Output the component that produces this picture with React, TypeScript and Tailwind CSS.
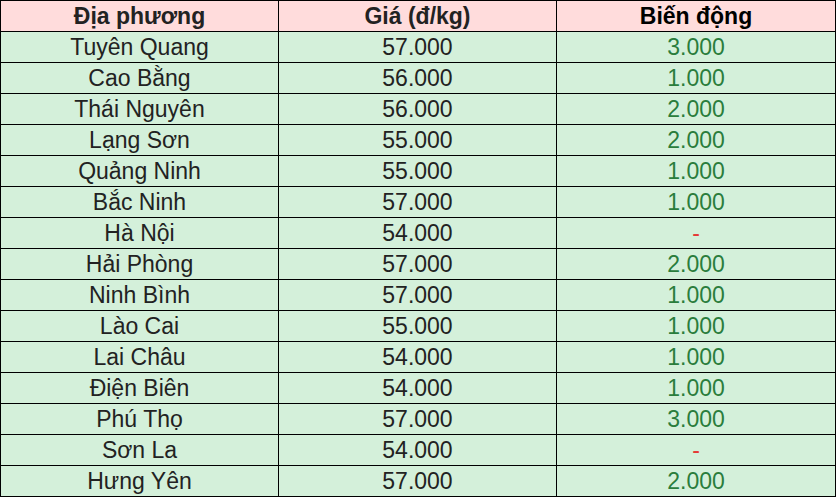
import React from "react";

const rows: [string, string, string][] = [
  ["Tuyên Quang", "57.000", "3.000"],
  ["Cao Bằng", "56.000", "1.000"],
  ["Thái Nguyên", "56.000", "2.000"],
  ["Lạng Sơn", "55.000", "2.000"],
  ["Quảng Ninh", "55.000", "1.000"],
  ["Bắc Ninh", "57.000", "1.000"],
  ["Hà Nội", "54.000", "-"],
  ["Hải Phòng", "57.000", "2.000"],
  ["Ninh Bình", "57.000", "1.000"],
  ["Lào Cai", "55.000", "1.000"],
  ["Lai Châu", "54.000", "1.000"],
  ["Điện Biên", "54.000", "1.000"],
  ["Phú Thọ", "57.000", "3.000"],
  ["Sơn La", "54.000", "-"],
  ["Hưng Yên", "57.000", "2.000"],
];

export default function App() {
  return (
    <div className="w-[837px] h-[498px] bg-white" style={{ fontFamily: '"Liberation Sans", Arial, sans-serif' }}>
      <table className="border-collapse w-[836px] table-fixed text-[23px] text-[#222222]">
        <colgroup>
          <col className="w-[278px]" />
          <col className="w-[278px]" />
          <col className="w-[279px]" />
        </colgroup>
        <thead>
          <tr className="bg-[#ffdcdc] h-[31px]">
            <th className="border border-black p-0 text-center font-bold leading-[30px]">Địa phương</th>
            <th className="border border-black p-0 text-center font-bold leading-[30px]">Giá (đ/kg)</th>
            <th className="border border-black p-0 text-center font-bold leading-[30px] text-black">Biến động</th>
          </tr>
        </thead>
        <tbody>
          {rows.map(([a, b, c]) => (
            <tr key={a} className="bg-[#d4f0da] h-[31px]">
              <td className="border border-black p-0 text-center leading-[30px]">{a}</td>
              <td className="border border-black p-0 text-center leading-[30px]">{b}</td>
              <td
                className={
                  c === "-"
                    ? "border border-black p-0 text-center leading-[30px] text-[#e53935]"
                    : "border border-black p-0 text-center leading-[30px] text-[#2a7d3c]"
                }
              >
                {c}
              </td>
            </tr>
          ))}
        </tbody>
      </table>
    </div>
  );
}
